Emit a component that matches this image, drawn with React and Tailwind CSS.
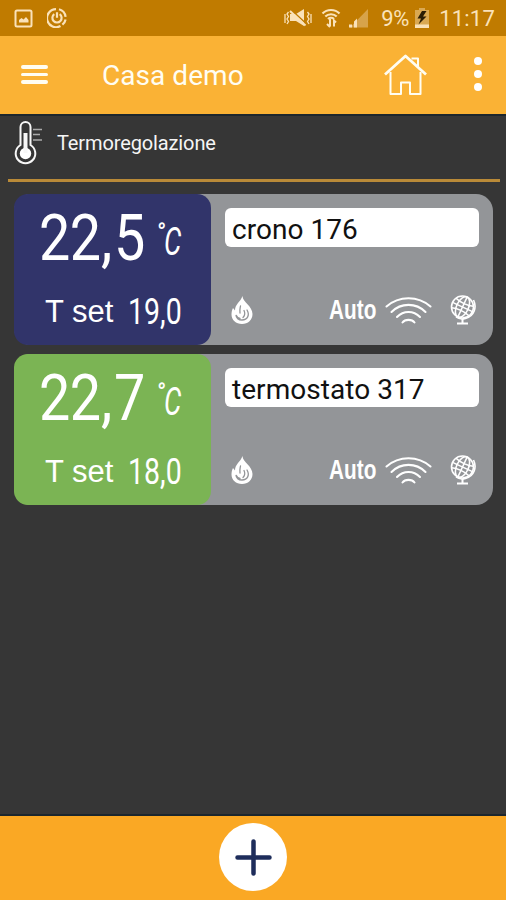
const thermostats = [
  { id: 1, name: "crono 176", whole: "22", decimal: "5", setWhole: "19", setDecimal: "0", panel: "bg-[#31346a]" },
  { id: 2, name: "termostato 317", whole: "22", decimal: "7", setWhole: "18", setDecimal: "0", panel: "bg-[#7bb454]" },
];

function StatusBar() {
  return (
    <div className="flex h-9 items-center bg-[#c07b00] pr-[11px] pl-[14px] text-[#fae2b9]">
      <svg className="h-[19px] w-[19px]" viewBox="0 0 19 19" fill="none" stroke="currentColor" strokeWidth="2">
        <rect x="1.5" y="1.5" width="16" height="16" rx="1.5" />
        <path d="M5 13.5V11l2.5-2 2 1.5L12 8l2.5 3v2.5z" fill="currentColor" stroke="none" />
      </svg>
      <svg className="ml-[14px] h-5 w-5" viewBox="0 0 20 20" fill="none" stroke="currentColor" strokeWidth="2.2">
        <path d="M12 1.3a9 9 0 0 1 6.6 7.5M18.6 11.5a9 9 0 0 1-3.2 5.2M13.5 18A9 9 0 1 1 9 1.2" />
        <path d="M7.3 6.2a4.6 4.6 0 1 0 5.4 0M10 4.3v5.5" />
      </svg>

      <svg className="ml-auto h-5 w-7" viewBox="0 0 28 20" fill="none" stroke="currentColor" strokeWidth="1.5">
        <path d="M6 6h6l8-5v17l-8-5H6z" fill="currentColor" stroke="none" />
        <path d="M7 1.5l15 14" stroke="#c07b00" strokeWidth="1.5" />
        <path d="M6 3l15.500 14.500" strokeWidth="2" />
        <path d="M4.500 4L3 6l1.500 2.500L3 11l1.500 2.500L3 16M1 6v9M23.500 4L25 6l-1.500 2.500L25 11l-1.500 2.500L25 16M27 6v9" strokeWidth="1.300" />
      </svg>
      <svg className="ml-[9px] h-5 w-5" viewBox="0 0 20 20" fill="none" stroke="currentColor" strokeWidth="2.2">
        <path d="M1.500 5.500C6 .8 14 .8 18.500 5.500M4.300 8.500c3-3 8.400-3 11.400 0M7 11c1.700-1.600 4.300-1.600 6 0" />
        <path d="M9 11v7.500M6 16l3 3M13 18.500v-6l2 2" strokeWidth="2" />
      </svg>
      <svg className="ml-[8px] h-[19px] w-[19px]" viewBox="0 0 19 19" fill="currentColor">
        <path d="M1 18.500L19 0v18.500z" opacity=".4" />
        <path d="M0 18.500v-3h3v3zM5 18.500v-6l3-3v9z" />
      </svg>
      <span className="ml-[13px] w-[29px] pt-px font-['Roboto'] text-[22px] leading-9 tracking-[-0.300px]">9%</span>
      <svg className="ml-[5px] h-5 w-[14px]" viewBox="0 0 14 20">
        <path d="M0 2h4V0h6v2h4v18H0z" fill="currentColor" opacity=".45" />
        <path d="M0 16.500h14V20H0z" fill="currentColor" />
        <path d="M7 3L2.500 10.500H6L3.500 16.500L11.500 8.500H8L11.500 3z" fill="#2a1d05" />
      </svg>
      <span className="ml-[10px] pt-px font-['Roboto'] text-[22px] leading-9 tracking-[0.200px]">11:17</span>
    </div>
  );
}

function Header() {
  return (
    <header className="flex h-[78px] items-center bg-[#fab235] pr-[24px] pl-[21px] text-[#fffdf2]">
      <div className="flex w-[27px] flex-col gap-1 pb-px">
        <div className="h-[3.500px] rounded-full bg-[#fffdf2]" />
        <div className="h-[3.500px] rounded-full bg-[#fffdf2]" />
        <div className="h-[3.500px] rounded-full bg-[#fffdf2]" />
      </div>
      <h1 className="ml-[54px] pt-[2px] font-['Roboto'] text-[28px] leading-none tracking-[0.050px]">Casa demo</h1>
      <svg className="ml-auto h-[42px] w-[43px]" viewBox="0 0 43 42" fill="none" stroke="currentColor" strokeWidth="2" strokeLinejoin="round">
        <path d="M6.500 18v22h10.500V28.500h9V40h10.500V18" />
        <path d="M1 20.500L21.500 2 42 20.500" strokeWidth="2.800" />
        <path d="M27.500 4.500H34v8" />
      </svg>
      <div className="ml-[47px] flex w-2 flex-col gap-[5px] pb-[2px]">
        <div className="h-2 rounded-full bg-white" />
        <div className="h-2 rounded-full bg-white" />
        <div className="h-2 rounded-full bg-white" />
      </div>
    </header>
  );
}

function SectionTitle() {
  return (
    <div className="mr-[6px] ml-2 flex h-[66px] border-b-[3px] border-[#b98a38] pt-[5px] pl-[6px]">
      <svg className="h-11 w-[29px]" viewBox="0 0 29 44" fill="none" stroke="#f7f7f7" strokeWidth="2">
        <path d="M6.500 24V6a5 5 0 0 1 10 0v18a9.800 9.800 0 1 1-10 0z" />
        <circle cx="11.500" cy="32.500" r="5.700" fill="#fff" stroke="none" />
        <path d="M11.500 32V12" strokeWidth="4" />
        <path d="M19 8.500h9M19 13.500h7M19 19h9" stroke="#aaa" strokeWidth="1.500" />
      </svg>
      <h2 className="ml-[14px] pt-[10px] font-['Roboto'] text-[20px] leading-6 tracking-[-0.120px] text-[#f5f5f5]">
        Termoregolazione
      </h2>
    </div>
  );
}

function Reading({ item }) {
  return (
    <div className={`h-[151px] w-[197px] shrink-0 rounded-[14px] text-white ${item.panel}`}>
      <div className="flex h-[88px] pt-[14px] pl-[25px] font-['Roboto'] text-[64px] leading-[62px]">
        <span className="w-[62px] origin-left scale-x-[0.870] tracking-[-0.500px]">{item.whole}</span>
        <span className="w-[13px] origin-left scale-x-[0.900]">,</span>
        <span className="w-[42px] origin-left scale-x-[0.870]">{item.decimal}</span>
        <span className="flex items-start pt-[11px] text-[39px] leading-[46px] italic">
          <span className="w-2 text-[24px] leading-[26px] font-bold">°</span>
          <span className="origin-left scale-x-[0.700]">C</span>
        </span>
      </div>
      <div className="flex items-center pl-[31px]">
        <span className="w-[83px] font-['Liberation_Sans'] text-[31px] leading-[60px]">T set</span>
        <span className="origin-left scale-x-[0.770] font-['Roboto'] text-[37px] leading-[60px]">
          {item.setWhole},{item.setDecimal}
        </span>
      </div>
    </div>
  );
}

function FlameIcon() {
  return (
    <svg className="h-[30px] w-[22px]" viewBox="0 0 22 30">
      <path d="M11.500 1c0 6 10 10 10 18 0 6-4.500 10-10.500 10S.5 25 .5 19.500c0-2.500.5-4.500 1.500-6.500l2 2.500C4 9 9.500 7 11.500 1z" fill="#fff" />
      <path d="M16 15c3 5 .5 10-5 10-3.500 0-6-2-6-5 1 2 2 3 4 3.500M9.500 11c-.5 3-1 4-.5 7M13 15.500c1.500 3 1 5-1 7" fill="none" stroke="#939598" strokeWidth="1.300" strokeLinecap="round" />
    </svg>
  );
}

function WifiIcon() {
  return (
    <svg className="h-[27px] w-[47px]" viewBox="0 0 47 27" fill="none" stroke="#fff" strokeWidth="2.100" strokeLinecap="round">
      <path d="M1.500 9.500C14-1.500 33-1.500 45.500 9.500M6.500 15C16 5.500 31 5.500 40.500 15M12 20c6.500-6.700 16.500-6.700 23 0M17.500 25.500c2.500-3.500 9.500-3.500 12 0" />
    </svg>
  );
}

function GlobeIcon() {
  return (
    <svg className="h-[30px] w-[26px]" viewBox="0 0 26 30" fill="none" stroke="#fff" strokeWidth="1.600">
      <circle cx="12.500" cy="12" r="11" />
      <g transform="rotate(25 12.500 12)">
        <ellipse cx="12.500" cy="12" rx="6" ry="11" />
        <path d="M12.500 1v22M1.500 12h22M3 6.800c5 2 14 2 19 0M3 17.200c5-2 14-2 19 0" />
      </g>
      <path d="M23.500 5c3.500 7 1 16-8 18.500-4 1-7 .5-9.500-1.500" />
      <path d="M12.500 24v4M7 28.500h11" strokeWidth="2" />
    </svg>
  );
}

function ThermostatCard({ item }) {
  return (
    <div className="flex h-[151px] rounded-[17px] bg-[#939598]">
      <Reading item={item} />
      <div className="flex flex-1 flex-col justify-between pt-[14px] pr-[14px] pb-5 pl-[14px]">
        <div className="h-[39px] rounded-md bg-white pt-[2px] pl-[7px] font-['Roboto'] text-[28px] leading-10 tracking-[0.050px] text-[#111]">
          {item.name}
        </div>
        <div className="flex h-[30px] items-center pr-[3px] pl-[6px]">
          <FlameIcon />
          <span className="ml-[76px] w-[56px] origin-left scale-x-[0.770] font-['Liberation_Sans'] text-[27px] leading-[30px] font-bold text-white">
            Auto
          </span>
          <WifiIcon />
          <div className="ml-auto">
            <GlobeIcon />
          </div>
        </div>
      </div>
    </div>
  );
}

export default function App() {
  return (
    <div className="flex h-[900px] w-[506px] flex-col overflow-hidden bg-[#363636]">
      <StatusBar />
      <Header />
      <main className="flex-1 border-y-2 border-[#1c262d]">
        <SectionTitle />
        <div className="mt-[12px] mr-[13px] ml-[14px] flex flex-col gap-[9px]">
          {thermostats.map((item) => (
            <ThermostatCard key={item.id} item={item} />
          ))}
        </div>
      </main>
      <footer className="flex h-[84px] justify-center bg-[#faa824] pt-[7px]">
        <button className="flex h-[68px] w-[68px] items-center justify-center rounded-full bg-white">
          <svg className="h-[38px] w-[38px]" viewBox="0 0 38 38" stroke="#1e2d5b" strokeWidth="4.500" strokeLinecap="round">
            <path d="M19.500 3.500v32M3.500 19.500h32" />
          </svg>
        </button>
      </footer>
    </div>
  );
}
